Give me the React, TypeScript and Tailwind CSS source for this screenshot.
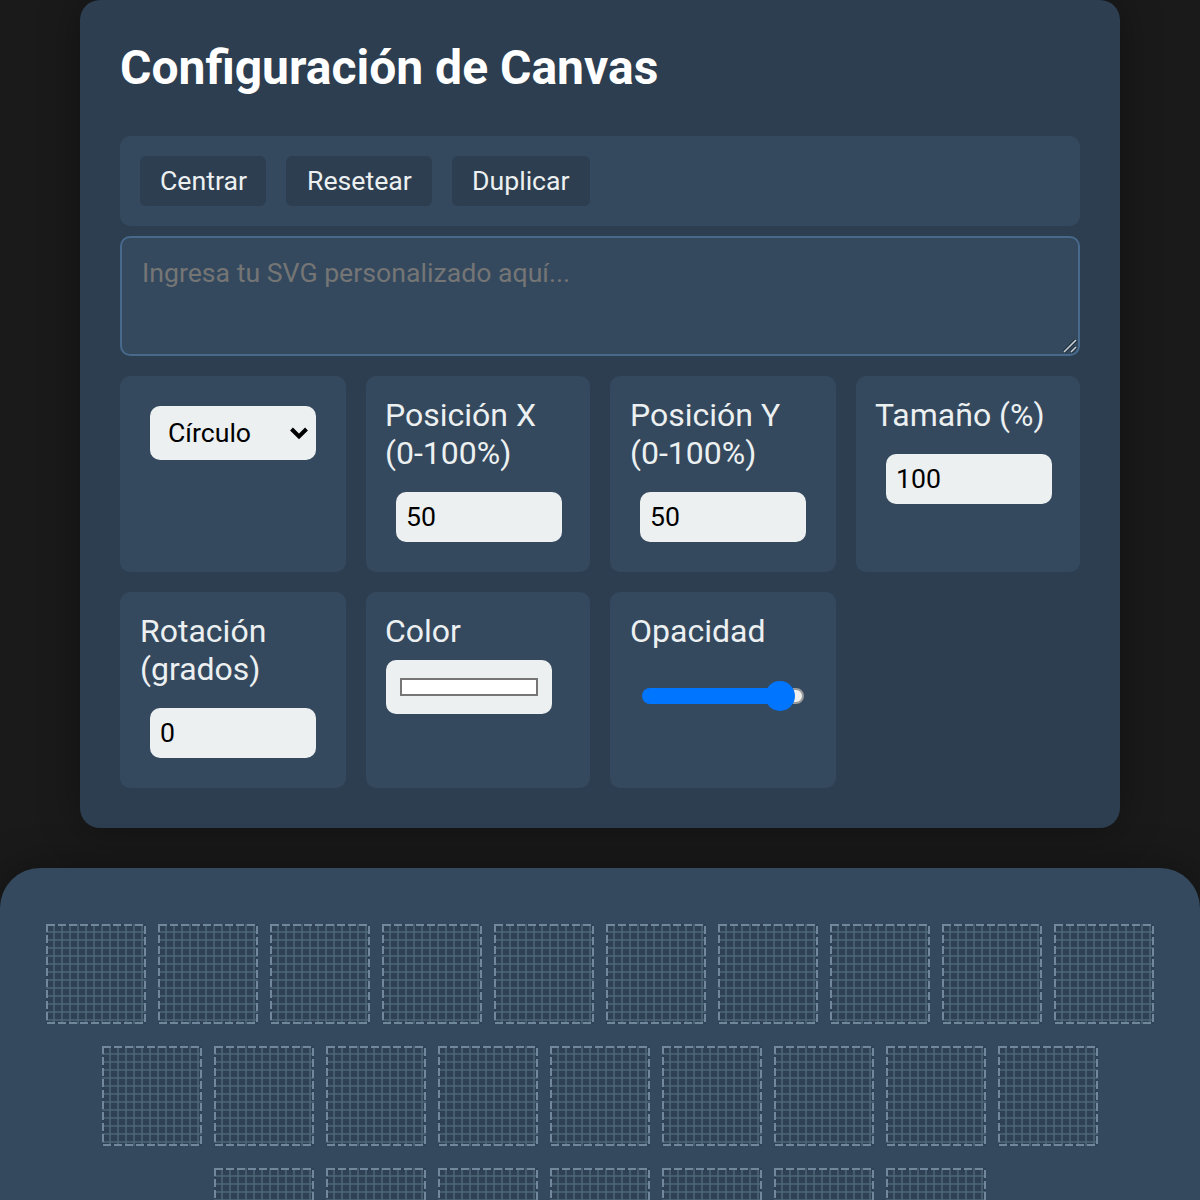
const tileRows = [10, 9, 7];
const gridLines = [8, 16, 24, 32, 40, 48, 56, 64, 72, 80, 88, 96];

function Cell({ label, nudge, children }: { label?: string; nudge?: boolean; children: React.ReactNode }) {
  return (
    <div className="rounded-[10px] bg-[#34495e] p-5">
      {label && (
        <label className={nudge ? "-ml-px block text-[32px] leading-[38px] text-[#ecf0f1]" : "block text-[32px] leading-[38px] text-[#ecf0f1]"}>
          {label}
        </label>
      )}
      {children}
    </div>
  );
}

function NumberField({ value }: { value: string }) {
  return (
    <input
      type="text"
      defaultValue={value}
      className="mx-2.5 mt-5 block h-[50px] w-[166px] rounded-[10px] bg-[#ecf0f1] pl-2.5 text-[26.67px] text-black outline-none"
    />
  );
}

// one dashed square of the canvas, drawn because the dash rhythm isn't what css gives
function Tile() {
  return (
    <svg className="block h-[100px] w-[100px] shrink-0" viewBox="0 0 100 100">
      <rect width="100" height="100" fill="#2e4155" />
      {gridLines.map((n) => (
        <g key={n} stroke="#4f6679" strokeWidth="1.5">
          <path d={`M${n} 0V100`} />
          <path d={`M0 ${n}H100`} />
        </g>
      ))}
      <rect x="1" y="1" width="98" height="98" fill="none" stroke="#71889c" strokeWidth="2" strokeDasharray="8 3" />
    </svg>
  );
}

export default function App() {
  return (
    <div className="h-[1200px] overflow-hidden bg-[#1a1a1a] font-['Roboto',sans-serif]">
      {/* CONTROLS */}
      <div className="mx-auto h-[828px] w-[1040px] rounded-[20px] bg-[#2c3e50] px-10 pt-10 shadow-[0_0_40px_rgba(0,0,0,0.35)]">
        <h1 className="text-[48px] leading-[56px] font-bold text-white">Configuración de Canvas</h1>

        <div className="mt-10 flex h-[90px] gap-5 rounded-[10px] bg-[#34495e] p-5">
          <button className="h-[50px] w-[126px] rounded-[6px] bg-[#2c3e50] pl-5 text-left text-[26.67px] text-[#ecf0f1]">Centrar</button>
          <button className="h-[50px] w-[146px] rounded-[6px] bg-[#2c3e50] pl-[21px] text-left text-[26.67px] text-[#ecf0f1]">Resetear</button>
          <button className="h-[50px] w-[138px] rounded-[6px] bg-[#2c3e50] pl-5 text-left text-[26.67px] text-[#ecf0f1]">Duplicar</button>
        </div>

        <div className="relative mt-2.5 h-[120px]">
          <textarea
            placeholder="Ingresa tu SVG personalizado aquí..."
            className="block h-full w-full resize-none rounded-[10px] border-2 border-[#46698c] bg-[#34495e] px-5 py-5 text-[26.67px] leading-[31px] text-white outline-none placeholder:text-[#757575]"
          />
          <svg className="absolute right-[2px] bottom-[2px] h-4 w-4" viewBox="0 0 16 16">
            <path d="M2 14 L14 2 M9 14 L14 9" stroke="#1f2d3a" strokeWidth="3.4" />
            <path d="M2 14 L14 2 M9 14 L14 9" stroke="#c6d0d6" strokeWidth="1.6" />
          </svg>
        </div>

        <div className="mt-5 grid grid-cols-[226px_224px_226px_224px] grid-rows-[196px_196px] gap-5">
          <Cell>
            <div className="relative m-2.5 h-[54px] w-[166px]">
              <select className="block h-full w-full appearance-none rounded-[10px] bg-[#ecf0f1] pl-[18px] text-[26.67px] text-black outline-none">
                <option>Círculo</option>
              </select>
              <svg className="pointer-events-none absolute top-[20px] right-[7px] h-[14px] w-[20px]" viewBox="0 0 20 14" fill="none">
                <path d="M2.5 3 L10 10.5 L17.5 3" stroke="#000" strokeWidth="4" />
              </svg>
            </div>
          </Cell>
          <Cell label="Posición X (0-100%)" nudge>
            <NumberField value="50" />
          </Cell>
          <Cell label="Posición Y (0-100%)">
            <NumberField value="50" />
          </Cell>
          <Cell label="Tamaño (%)" nudge>
            <NumberField value="100" />
          </Cell>
          <Cell label="Rotación (grados)">
            <NumberField value="0" />
          </Cell>
          <Cell label="Color" nudge>
            <div className="mt-2.5 flex h-[54px] w-[166px] items-center justify-center rounded-[10px] bg-[#ecf0f1]">
              <div className="h-[18px] w-[138px] border-2 border-[#767676] bg-white" />
            </div>
          </Cell>
          <Cell label="Opacidad">
            {/* slider */}
            <div className="relative mt-[31px] ml-3 h-[30px] w-[162px]">
              <div className="absolute top-[7px] right-0 h-4 w-8 rounded-full border-2 border-[#9a9a9a] bg-[#efefef]" />
              <div className="absolute top-[7px] left-0 h-4 w-[138px] rounded-l-full bg-[#0075ff]" />
              <div className="absolute top-0 left-[123px] h-[30px] w-[30px] rounded-full bg-[#0075ff]" />
            </div>
          </Cell>
        </div>
      </div>

      {/* TILES */}
      <div className="mt-10 flex h-[600px] flex-col gap-[22px] rounded-t-[40px] bg-[#34495e] pt-14 shadow-[0_0_40px_rgba(0,0,0,0.35)]">
        {tileRows.map((count, i) => (
          <div key={i} className="flex justify-center gap-3">
            {Array.from({ length: count }).map((_, j) => (
              <Tile key={j} />
            ))}
          </div>
        ))}
      </div>
    </div>
  );
}
